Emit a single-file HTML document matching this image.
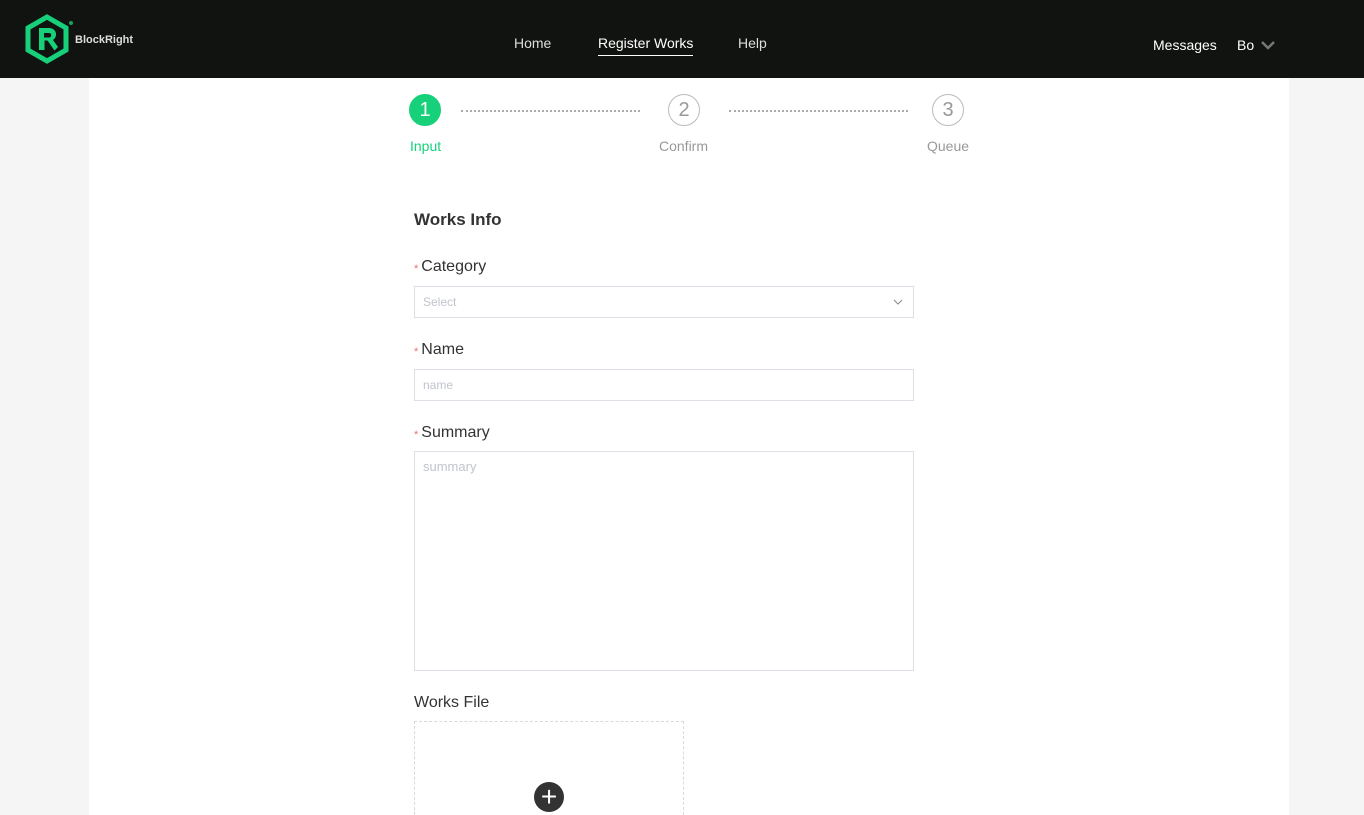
<!DOCTYPE html>
<html style="overflow:hidden;height:815px"><head><style>
*{margin:0;padding:0;box-sizing:border-box}
body{width:1364px;height:815px;overflow:hidden;background:#f5f5f5;font-family:"Liberation Sans",sans-serif;position:relative}
.hdr{position:absolute;left:0;top:0;width:1364px;height:78px;background:#111311}
.main{position:absolute;left:89px;top:78px;width:1200px;height:737px;background:#fff}
.nav{position:absolute;color:#ddd;font-size:14px;top:35px}
.a{position:absolute}
.lbl{position:absolute;left:414px;font-size:16px;color:#333}
.lbl i{color:#f56c6c;font-style:normal;font-size:11px;margin-right:3px;vertical-align:-1px}
.inp{position:absolute;left:414px;width:500px;border:1px solid #dcdfe6;background:#fff;font-size:12px;color:#c0c4cc;padding-left:8px}
.circ{position:absolute;top:94px;width:32px;height:32px;border-radius:50%;border:1px solid #bbb;color:#999;font-size:20px;text-align:center;line-height:30px}
.dots{position:absolute;top:110px;height:0;border-top:2px dotted #aaa}
.st{position:absolute;top:138px;font-size:14px;color:#999}
</style></head><body>
<div class="hdr">
<svg class="a" style="left:24px;top:14px" width="46" height="50" viewBox="0 0 46 50"><polygon points="23,3 42,14 42,36 23,47 4,36 4,14" fill="none" stroke="#17d17a" stroke-width="5"/><path d="M15 36V14h11a6.5 6.5 0 0 1 3 12l5 7-3.5 3.5-7-10h-3v9.5z" fill="#17d17a"/><path d="M20 19v4.5h5a2.2 2.2 0 0 0 0-4.5z" fill="#111311"/></svg>
<div class="a" style="left:69px;top:21px;width:4px;height:4px;border-radius:50%;background:#17a060"></div>
<div class="a" style="left:75px;top:34px;color:#ddd;font-size:11px;font-weight:bold">BlockRight</div>
<div class="nav" style="left:514px">Home</div>
<div class="nav" style="left:598px;color:#fff">Register Works</div>
<div class="a" style="left:598px;top:55px;width:95px;height:1px;background:#fff"></div>
<div class="nav" style="left:738px">Help</div>
<div class="nav" style="left:1153px;top:37px;color:#fff">Messages</div>
<div class="nav" style="left:1237px;top:37px;color:#fff">Bo</div>
<svg class="a" style="left:1260px;top:39px" width="16" height="12"><path d="M2 3l6 6 6-6" fill="none" stroke="#777" stroke-width="2.5"/></svg>
</div>
<div class="main"></div>
<div class="circ" style="left:409px;background:#17d17a;border-color:#17d17a;color:#fff">1</div>
<div class="circ" style="left:668px">2</div>
<div class="circ" style="left:932px">3</div>
<div class="dots" style="left:461px;width:179px"></div>
<div class="dots" style="left:729px;width:179px"></div>
<div class="st" style="left:410px;color:#17d17a">Input</div>
<div class="st" style="left:659px">Confirm</div>
<div class="st" style="left:927px">Queue</div>
<div class="a" style="left:414px;top:210px;font-size:17px;font-weight:bold;color:#333">Works Info</div>
<div class="lbl" style="top:258px"><i>*</i>Category</div>
<div class="inp" style="top:286px;height:32px;line-height:30px">Select<svg class="a" style="right:10px;top:11px" width="10" height="8"><path d="M1 2l4 4 4-4" fill="none" stroke="#888" stroke-width="1"/></svg></div>
<div class="lbl" style="top:341px"><i>*</i>Name</div>
<div class="inp" style="top:369px;height:32px;line-height:30px">name</div>
<div class="lbl" style="top:424px"><i>*</i>Summary</div>
<div class="inp" style="top:451px;height:220px;padding-top:7px;font-size:13px">summary</div>
<div class="lbl" style="top:694px">Works File</div>
<div class="a" style="left:414px;top:721px;width:270px;height:94px;border:1px dashed #d9d9d9;border-bottom:none;background:#fff"></div>
<div class="a" style="left:534px;top:782px;width:30px;height:30px;border-radius:50%;background:#333;color:#fff;font-size:28px;line-height:29px;text-align:center">+</div>
</body></html>
